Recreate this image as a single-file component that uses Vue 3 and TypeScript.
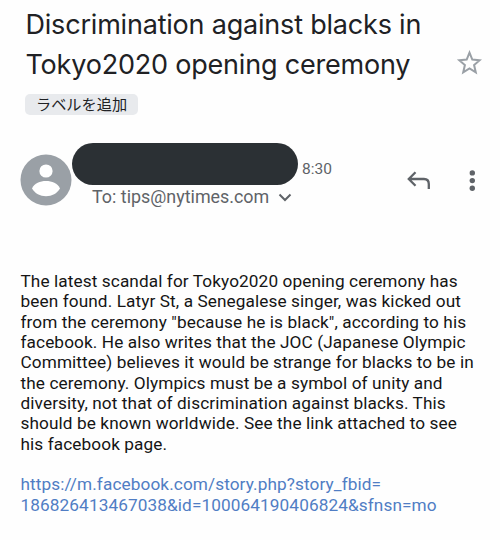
<template>
  <main class="mail">
    <header class="subject-row">
      <h1 class="subject">
        <span v-for="line in subjectLines" :key="line" class="line">{{ line }}</span>
      </h1>
      <button class="icon-button star" aria-label="Star">
        <svg width="26" height="26" viewBox="0 0 26 26">
          <path d="M13.5 2.6 L16.3 9.6 L23.7 10.2 L18.1 15.1 L19.8 22.4 L13.5 18.5 L7.2 22.4 L8.9 15.1 L3.3 10.2 L10.7 9.6 Z" />
        </svg>
      </button>
    </header>

    <button class="label-chip">ラベルを追加</button>

    <section class="sender-row">
      <svg class="avatar" width="52" height="52" viewBox="0 0 52 52">
        <circle cx="26" cy="26" r="25.5" fill="#9aa0a6" />
        <circle cx="26" cy="17" r="6.6" fill="#fff" />
        <path d="M12 34.5 C14.5 29 20 27 26 27 C32 27 37.5 29 40 34.5 C37 39.5 32 42.2 26 42.2 C20 42.2 15 39.5 12 34.5 Z" fill="#fff" />
      </svg>
      <div class="sender">
        <div class="sender-top">
          <span class="redacted"></span>
          <time class="time">8:30</time>
        </div>
        <div class="recipient">
          <span>To: {{ recipient }}</span>
          <svg width="14" height="10" viewBox="0 0 14 10">
            <path d="M1.5 2.5 L7 8 L12.5 2.5" />
          </svg>
        </div>
      </div>
      <button class="icon-button reply" aria-label="Reply">
        <svg width="26" height="22" viewBox="0 0 26 22">
          <path d="M9.5 2.3 L2.8 9 L9.5 15.7 M2.8 9 H18 Q22.8 9 22.8 14 V19" />
        </svg>
      </button>
      <button class="icon-button more" aria-label="More">
        <svg width="8" height="24" viewBox="0 0 8 24">
          <circle v-for="y in [4.3, 12, 19.7]" :key="y" cx="4.3" :cy="y - 0.4" r="2.7" />
        </svg>
      </button>
    </section>

    <article class="body">
      <p>
        <span v-for="line in bodyLines" :key="line" class="line">{{ line }}</span>
      </p>
      <a class="link" :href="linkLines.join('')">
        <span v-for="line in linkLines" :key="line" class="line">{{ line }}</span>
      </a>
    </article>
  </main>
</template>

<script setup lang="ts">
const recipient: string = 'tips@nytimes.com'

const subjectLines: string[] = [
  'Discrimination against blacks in',
  'Tokyo2020 opening ceremony'
]

const bodyLines: string[] = [
  'The latest scandal for Tokyo2020 opening ceremony has',
  'been found. Latyr St, a Senegalese singer, was kicked out',
  'from the ceremony "because he is black", according to his',
  'facebook. He also writes that the JOC (Japanese Olympic',
  'Committee) believes it would be strange for blacks to be in',
  'the ceremony. Olympics must be a symbol of unity and',
  'diversity, not that of discrimination against blacks. This',
  'should be known worldwide. See the link attached to see',
  'his facebook page.'
]

const linkLines: string[] = [
  'https://m.facebook.com/story.php?story_fbid=',
  '186826413467038&id=100064190406824&sfnsn=mo'
]
</script>

<style>
body {
  margin: 0;
  background: #fefefe;
}
</style>

<style scoped>
.mail {
  box-sizing: border-box;
  width: 500px;
  height: 540px;
  padding-top: 5px;
  overflow: hidden;
  background: #fefefe;
  font-family: Roboto, "Noto Sans CJK JP", sans-serif;
}

.line {
  display: block;
  white-space: nowrap;
}

.subject-row {
  display: flex;
  align-items: flex-end;
  justify-content: space-between;
  height: 81px;
  padding: 0 18px 0 25.5px;
}

.subject {
  align-self: flex-start;
  margin: 0;
  color: #202124;
  font-family: Inter, Roboto, sans-serif;
  font-size: 27px;
  font-weight: 400;
  line-height: 40px;
  letter-spacing: -0.2px;
}

.icon-button {
  display: flex;
  padding: 0;
  border: 0;
  background: none;
}

.star {
  margin-bottom: 10px;
}

.star path {
  fill: none;
  stroke: #9aa0a6;
  stroke-width: 2;
}

.label-chip {
  display: block;
  width: 113px;
  height: 21px;
  margin: 8px 0 0 25px;
  padding: 0 0 2px;
  border: 0;
  border-radius: 5px;
  background: #e8eaed;
  color: #202124;
  font-family: "Noto Sans CJK JP", sans-serif;
  font-size: 15.2px;
  line-height: 19px;
}

.sender-row {
  display: flex;
  height: 80px;
  margin-top: 28px;
  padding-left: 20px;
}

.avatar {
  flex: none;
  margin-top: 11px;
}

.sender {
  width: 334px;
}

.sender-top {
  display: flex;
  gap: 4px;
}

.redacted {
  width: 226px;
  height: 42px;
  border-radius: 21px;
  background: #2b3034;
}

.time {
  margin-top: 16px;
  color: #5f6368;
  font-size: 15.5px;
  line-height: 20px;
}

.recipient {
  display: flex;
  align-items: center;
  gap: 9px;
  height: 23px;
  padding-left: 20px;
  color: #5f6368;
  font-size: 17.9px;
  line-height: 23px;
  white-space: nowrap;
}

.recipient path,
.reply path {
  fill: none;
  stroke: #5f6368;
  stroke-width: 2;
}

.reply path {
  stroke-width: 2.3;
}

.reply {
  width: 26px;
  height: 22px;
  margin-top: 27px;
}

.more {
  height: 24px;
  margin: 26px 0 0 36px;
}

.more circle {
  fill: #5f6368;
}

.body {
  margin-top: 48px;
  padding-left: 20.5px;
  color: #151515;
  font-size: 17.22px;
  line-height: 20.34px;
  letter-spacing: 0.1px;
}

.body p {
  margin: 0;
}

.link {
  display: block;
  margin-top: 20.34px;
  color: #507dc4;
  text-decoration: none;
}
</style>
